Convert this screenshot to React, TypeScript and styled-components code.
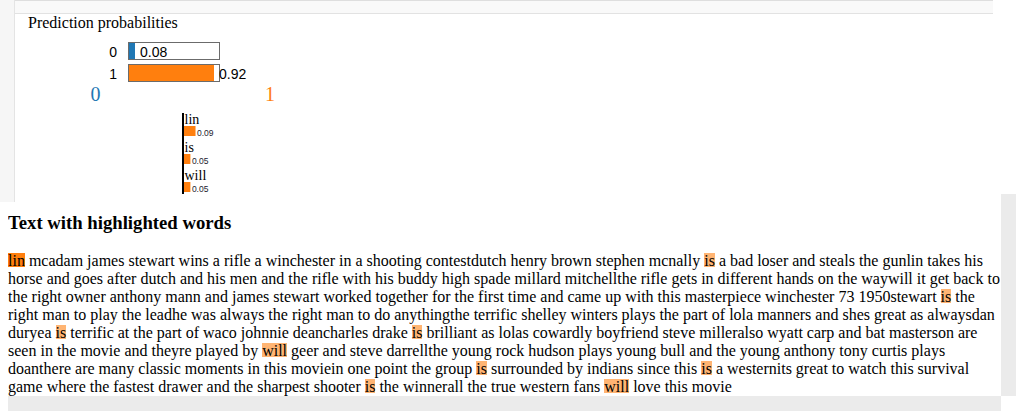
import React from "react";
import styled, { createGlobalStyle } from "styled-components";

const GlobalStyle = createGlobalStyle`
  html, body { margin: 0; padding: 0; background: #ffffff; }
  body { font-family: "Liberation Serif", "Times New Roman", serif; color: #000; }
`;

const Page = styled.div`
  width: 1024px;
  height: 419px;
  overflow: hidden;
  background: #ffffff;
`;

const Notebook = styled.div`
  display: flex;
  align-items: flex-start;
  height: 194px;
`;

const Gutter = styled.div`
  width: 14px;
  height: 202px;
  flex: none;
  background: #f6f6f6;
  border-right: 1px solid #e4e4e4;
`;

const Cell = styled.div`
  display: flex;
  flex-direction: column;
`;

const CellHeader = styled.div`
  width: 978px;
  height: 12px;
  background: #f9f9f9;
  border-top: 1px solid #dedede;
  border-bottom: 1px solid #e2e2e2;
`;

const ChartTitle = styled.div`
  margin-left: 13px;
  font-size: 16px;
  line-height: 18px;
  height: 18px;
`;

const Chart = styled.svg`
  display: block;
  overflow: visible;
`;

const Frame = styled.div`
  margin-left: 8px;
  width: 1008px;
  height: 217px;
  display: grid;
  grid-template-columns: 993px 15px;
  grid-template-rows: 202px 15px;
`;

const Viewport = styled.div`
  overflow: hidden;
`;

const Track = styled.div`
  background: #ebebeb;
`;

const Corner = styled.div`
  background: #ffffff;
`;

const Heading = styled.h3`
  margin: 18px 0 18px;
  font-size: 18.72px;
  font-weight: bold;
`;

const Body = styled.div`
  font-size: 16px;
  line-height: 18px;
`;

const Line = styled.div`
  white-space: nowrap;
`;

const Hl = styled.span<{ $color: string }>`
  background: linear-gradient(
    to bottom,
    transparent 1.3px,
    ${(p) => p.$color} 1.3px,
    ${(p) => p.$color} 15px,
    transparent 15px
  );
`;

const STRONG = "rgb(255, 127, 14)";
const LIGHT = "rgba(255, 127, 14, 0.58)";

const LINES = [
  "[[lin]] mcadam james stewart wins a rifle a winchester in a shooting contestdutch henry brown stephen mcnally [is] a bad loser and steals the gunlin takes his",
  "horse and goes after dutch and his men and the rifle with his buddy high spade millard mitchellthe rifle gets in different hands on the waywill it get back to",
  "the right owner anthony mann and james stewart worked together for the first time and came up with this masterpiece winchester 73 1950stewart [is] the",
  "right man to play the leadhe was always the right man to do anythingthe terrific shelley winters plays the part of lola manners and shes great as alwaysdan",
  "duryea [is] terrific at the part of waco johnnie deancharles drake [is] brilliant as lolas cowardly boyfriend steve milleralso wyatt carp and bat masterson are",
  "seen in the movie and theyre played by [will] geer and steve darrellthe young rock hudson plays young bull and the young anthony tony curtis plays",
  "doanthere are many classic moments in this moviein one point the group [is] surrounded by indians since this [is] a westernits great to watch this survival",
  "game where the fastest drawer and the sharpest shooter [is] the winnerall the true western fans [will] love this movie",
];

function renderText(raw: string) {
  const parts = raw.split(/(\[\[[^\]]+\]\]|\[[^\]]+\])/);
  return parts.map((part, i) => {
    if (part.startsWith("[[")) {
      return (
        <Hl key={i} $color={STRONG}>
          {part.slice(2, -2)}
        </Hl>
      );
    }
    if (part.startsWith("[")) {
      return (
        <Hl key={i} $color={LIGHT}>
          {part.slice(1, -1)}
        </Hl>
      );
    }
    return <React.Fragment key={i}>{part}</React.Fragment>;
  });
}

const probas = [
  { label: "0", value: 0.08, color: "#1f77b4", fillW: 6 },
  { label: "1", value: 0.92, color: "#ff7f0e", fillW: 85 },
];

const features = [
  { name: "lin", value: 0.09 },
  { name: "is", value: 0.05 },
  { name: "will", value: 0.05 },
];

const SANS = "'Liberation Sans', Arial, sans-serif";
const SERIF = "'Liberation Serif', 'Times New Roman', serif";

function ProbaChart() {
  const barW = 91;
  return (
    <Chart width={300} height={76}>
      {probas.map((p, i) => {
        const y = 10.5 + i * 22;
        const inside = p.value < 0.5;
        return (
          <g key={p.label}>
            <text x={102} y={y + 14.5} textAnchor="end" fontFamily={SANS} fontSize={14} fill="#000">
              {p.label}
            </text>
            <rect x={113.5} y={y} width={barW} height={17} fill="#fff" stroke="#6b6b6b" strokeWidth={1} />
            <rect x={114} y={y + 0.5} width={p.fillW} height={16} fill={p.color} />
            <text x={inside ? 125 : 204} y={y + 14.5} fontFamily={SANS} fontSize={14} fill="#000">
              {p.value.toFixed(2)}
            </text>
          </g>
        );
      })}
      <text x={80.5} y={69} textAnchor="middle" fontFamily={SERIF} fontSize={20} fill="#1f77b4">
        0
      </text>
      <text x={255} y={69} textAnchor="middle" fontFamily={SERIF} fontSize={20} fill="#ff7f0e">
        1
      </text>
    </Chart>
  );
}

function FeatureChart() {
  const scale = 128;
  return (
    <Chart width={300} height={86}>
      <rect x={167} y={5} width={2} height={81} fill="#000" />
      {features.map((f, i) => {
        const base = i * 28;
        const w = f.value * scale;
        return (
          <g key={f.name}>
            <text x={169.5} y={base + 16} fontFamily={SERIF} fontSize={14} fill="#000">
              {f.name}
            </text>
            <rect x={169} y={base + 18} width={w} height={10} fill="#ff7f0e" />
            <text x={169 + w + 1.5} y={base + 28} fontFamily={SANS} fontSize={8.5} fill="#1b1b2e">
              {f.value.toFixed(2)}
            </text>
          </g>
        );
      })}
    </Chart>
  );
}

export default function App() {
  return (
    <Page>
      <GlobalStyle />
      <Notebook>
        <Gutter />
        <Cell>
          <CellHeader />
          <ChartTitle>Prediction probabilities</ChartTitle>
          <ProbaChart />
          <FeatureChart />
        </Cell>
      </Notebook>
      <Frame>
        <Viewport>
          <Heading>Text with highlighted words</Heading>
          <Body>
            {LINES.map((l, i) => (
              <Line key={i}>{renderText(l)}</Line>
            ))}
          </Body>
        </Viewport>
        <Track />
        <Track />
        <Corner />
      </Frame>
    </Page>
  );
}
